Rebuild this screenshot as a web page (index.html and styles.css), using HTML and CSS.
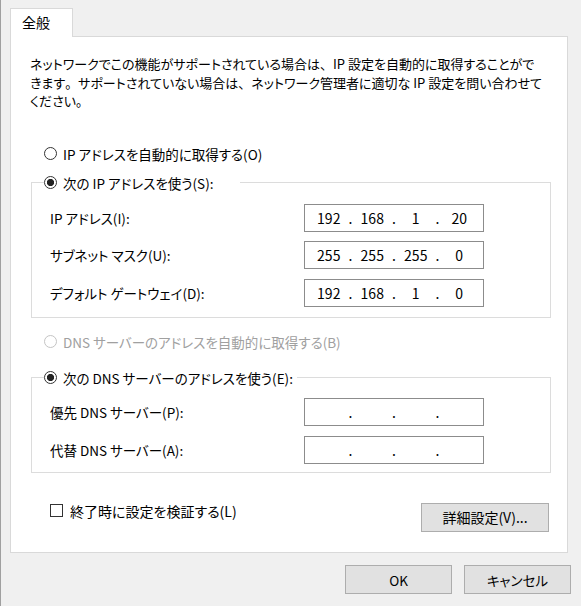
FILE: index.html
```html
<!DOCTYPE html>
<html lang="ja">
<head>
<meta charset="utf-8">
<title>IPv4 のプロパティ</title>
<link rel="stylesheet" href="styles.css">
</head>
<body>
<div class="dialog">
  <div class="tabs"><div class="tab">全般</div></div>
  <div class="panel">
    <p class="intro">ネットワークでこの機能がサポートされている場合は<span class="fw">、</span>IP 設定を自動的に取得することがで<br>きます<span class="fw">。</span>サポートされていない場合は<span class="fw">、</span>ネットワーク管理者に適切な IP 設定を問い合わせて<br>ください<span class="fw">。</span></p>

    <div class="radio-row r-auto-ip"><span class="radio"></span><span>IP アドレスを自動的に取得する(O)</span></div>

    <fieldset class="group">
      <legend class="legend-ip"><span class="radio-row"><span class="radio checked"></span><span>次の IP アドレスを使う(S):</span></span></legend>
      <div class="group-body">
        <div class="field-row">
          <span class="label">IP アドレス(I):</span>
          <div class="ipbox"><span class="seg">192</span><span class="dot">.</span><span class="seg">168</span><span class="dot">.</span><span class="seg">1</span><span class="dot">.</span><span class="seg">20</span></div>
        </div>
        <div class="field-row">
          <span class="label">サブネット マスク(U):</span>
          <div class="ipbox"><span class="seg">255</span><span class="dot">.</span><span class="seg">255</span><span class="dot">.</span><span class="seg">255</span><span class="dot">.</span><span class="seg">0</span></div>
        </div>
        <div class="field-row">
          <span class="label">デフォルト ゲートウェイ(D):</span>
          <div class="ipbox"><span class="seg">192</span><span class="dot">.</span><span class="seg">168</span><span class="dot">.</span><span class="seg">1</span><span class="dot">.</span><span class="seg">0</span></div>
        </div>
      </div>
    </fieldset>

    <div class="radio-row r-auto-dns disabled"><span class="radio"></span><span>DNS サーバーのアドレスを自動的に取得する(B)</span></div>

    <fieldset class="group group-dns">
      <legend><span class="radio-row"><span class="radio checked"></span><span>次の DNS サーバーのアドレスを使う(E):</span></span></legend>
      <div class="group-body">
        <div class="field-row">
          <span class="label">優先 DNS サーバー(P):</span>
          <div class="ipbox"><span class="seg"></span><span class="dot">.</span><span class="seg"></span><span class="dot">.</span><span class="seg"></span><span class="dot">.</span><span class="seg"></span></div>
        </div>
        <div class="field-row">
          <span class="label">代替 DNS サーバー(A):</span>
          <div class="ipbox"><span class="seg"></span><span class="dot">.</span><span class="seg"></span><span class="dot">.</span><span class="seg"></span><span class="dot">.</span><span class="seg"></span></div>
        </div>
      </div>
    </fieldset>

    <div class="bottom-row">
      <div class="check-row"><span class="checkbox"></span><span>終了時に設定を検証する(L)</span></div>
      <button class="btn btn-adv">詳細設定(V)...</button>
    </div>
  </div>
  <div class="actions">
    <button class="btn btn-main">OK</button>
    <button class="btn btn-main">キャンセル</button>
  </div>
</div>
</body>
</html>
```
FILE: styles.css
```css
* { box-sizing: border-box; }
html, body { margin: 0; padding: 0; }
body {
  width: 581px;
  height: 606px;
  overflow: hidden;
  background: #f0f0f0;
  border-left: 1px solid #a0a0a0;
  font-family: "Noto Sans CJK JP", "Noto Sans", sans-serif;
  font-size: 13.5px;
  font-feature-settings: "palt";
  color: #000;
}
.dialog { padding: 8px 10px 0 9px; }

.tabs {
  display: flex;
  height: 29px;
  margin-bottom: -1px;
  position: relative;
  z-index: 1;
}
.tab {
  width: 63px;
  height: 29px;
  background: #fff;
  border: 1px solid #d9d9d9;
  border-bottom: none;
  padding-left: 11px;
  font-size: 14px;
  line-height: 27px;
  font-feature-settings: normal;
}

.panel {
  width: 558px;
  height: 517px;
  background: #fff;
  border: 1px solid #d9d9d9;
  padding: 18px 0 0 20px;
}
.intro {
  margin: 0 0 0 -1px;
  font-size: 13px;
  line-height: 18.5px;
  white-space: nowrap;
}
.fw { font-feature-settings: normal; }

.radio-row {
  display: flex;
  align-items: center;
  height: 20px;
  gap: 6px;
  white-space: nowrap;
}
.radio {
  flex: none;
  width: 13px;
  height: 13px;
  border: 1px solid #333;
  border-radius: 50%;
  background: #fff;
}
.radio.checked {
  background: radial-gradient(circle, #222 0 3.3px, #fff 3.9px);
}
.r-auto-ip { margin: 33px 0 0 13px; }
.r-auto-dns { margin: 14px 0 0 13px; }
.disabled { color: #a0a0a0; }
.disabled .radio { border-color: #c4c4c4; }

.group {
  margin: 9px 0 0 0;
  width: 520px;
  min-width: 0;
  border: 1px solid #dcdcdc;
  padding: 0;
}
.group-dns { margin-top: 16px; }
.group legend {
  margin-left: 12px;
  padding: 0 4px 0 0;
}
.legend-ip { width: 196px; }
.group-body {
  display: flex;
  flex-direction: column;
  gap: 9.5px;
  padding: 11px 66px 10px 18px;
}
.group-dns .group-body { gap: 10px; padding-top: 10px; padding-bottom: 8px; }

.field-row {
  display: flex;
  align-items: center;
  justify-content: space-between;
  height: 28px;
}
.label { white-space: nowrap; }
.ipbox {
  width: 180px;
  height: 28px;
  border: 1px solid #8c8c8c;
  background: #fff;
  display: flex;
  align-items: center;
  padding-left: 6px;
  font-size: 14px;
}
.seg { width: 35.5px; text-align: center; }
.dot { width: 8px; text-align: center; }

.bottom-row {
  display: flex;
  justify-content: space-between;
  align-items: flex-start;
  width: 518px;
  margin-top: 30px;
}
.check-row {
  display: flex;
  align-items: center;
  gap: 7px;
  height: 16px;
  margin-left: 19px;
  white-space: nowrap;
  font-size: 14px;
}
.checkbox {
  flex: none;
  width: 13px;
  height: 13px;
  border: 1px solid #333;
  background: #fff;
}

.btn {
  font-family: inherit;
  font-size: 13.5px;
  font-feature-settings: "palt";
  color: #000;
  background: #e1e1e1;
  border: 1px solid #adadad;
  padding: 0;
  height: 29px;
  margin: 0;
}
.btn-adv { width: 128px; font-size: 14px; }
.actions {
  display: flex;
  justify-content: flex-end;
  gap: 12px;
  margin-top: 12px;
}
.btn-main { width: 107px; }
```
